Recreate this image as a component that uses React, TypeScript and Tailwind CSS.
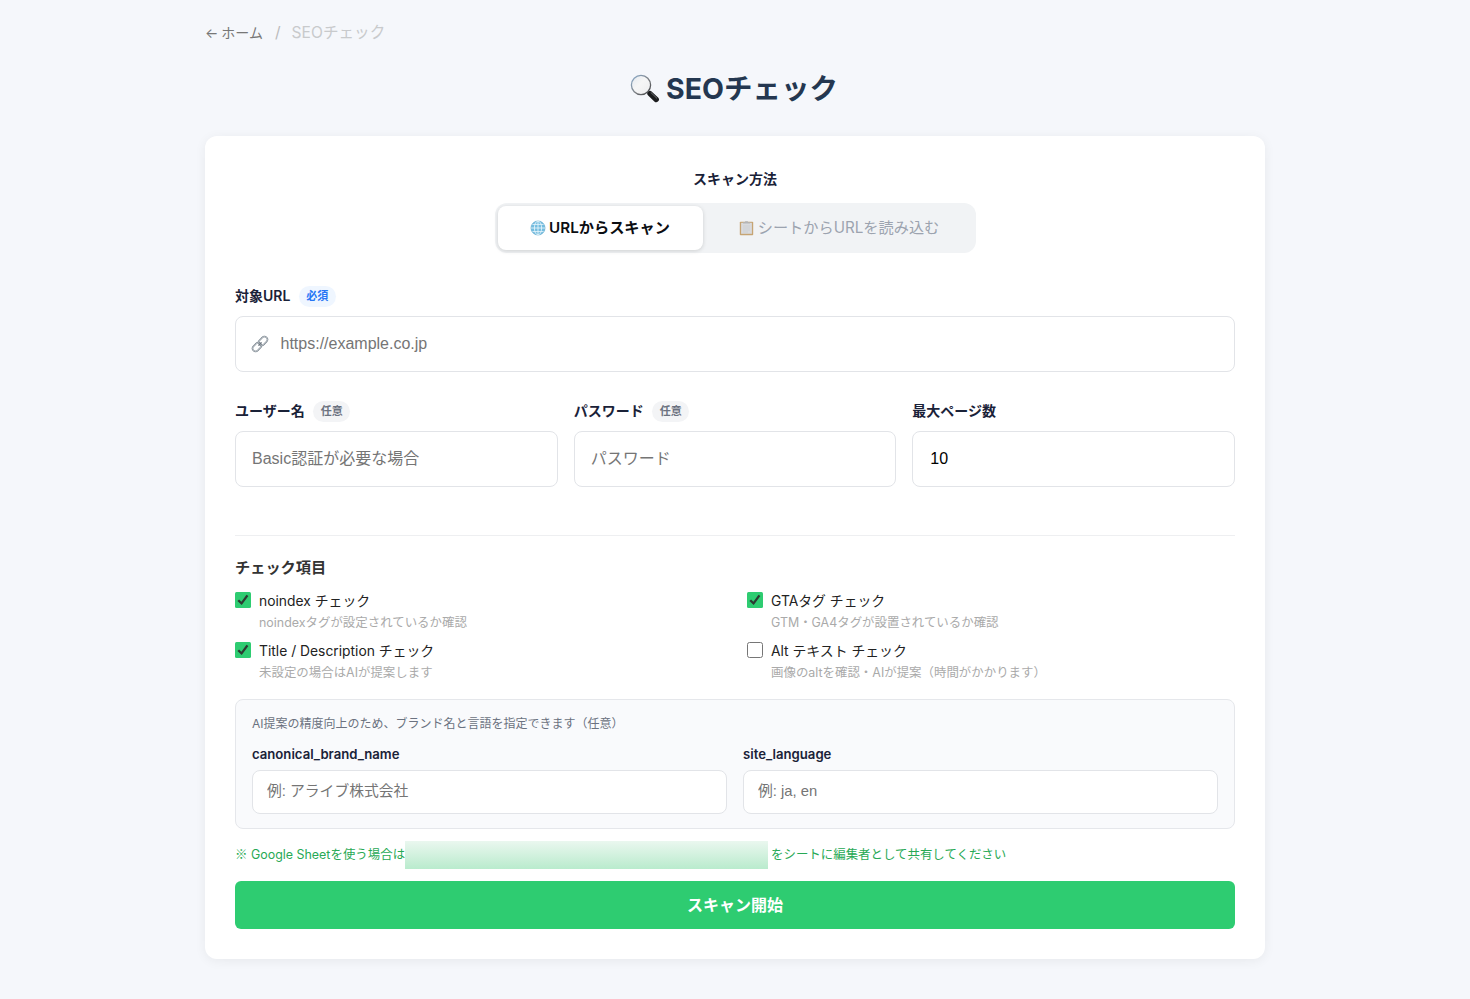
import React, { useState } from "react";

const ui = "font-['Inter','Noto_Sans_CJK_JP',sans-serif]";
const field = "font-['Liberation_Sans','Noto_Sans_CJK_JP',sans-serif]";

function MagnifierIcon() {
  return (
    <svg className="block shrink-0" width="30" height="30" viewBox="0 0 30 30" aria-hidden="true">
      <defs>
        <linearGradient id="lens" x1="0" y1="0" x2="1" y2="1">
          <stop offset="0" stopColor="#e3e9ef" />
          <stop offset=".45" stopColor="#f6f6f6" />
          <stop offset="1" stopColor="#ececee" />
        </linearGradient>
        <linearGradient id="rim" x1="0" y1="0" x2="1" y2="1">
          <stop offset="0" stopColor="#8fb0d0" />
          <stop offset=".55" stopColor="#7b7e82" />
          <stop offset="1" stopColor="#3c3d3f" />
        </linearGradient>
      </defs>
      <path d="M17.6 17.6l3 3" stroke="#6b6c6e" strokeWidth="1.8" />
      <path d="M20 19.6l6.2 5.9" stroke="#1b1c1e" strokeWidth="5.4" strokeLinecap="round" />
      <path d="M21 18.6l5.8 5.6" stroke="#77797d" strokeWidth=".9" strokeLinecap="round" />
      <circle cx="11" cy="11" r="9.6" fill="url(#lens)" stroke="url(#rim)" strokeWidth="1.3" />
    </svg>
  );
}

function GlobeIcon() {
  return (
    <svg className="block shrink-0" width="16" height="16" viewBox="0 0 16 16" fill="none" aria-hidden="true">
      <circle cx="8" cy="8" r="7" fill="#74bde0" stroke="#5ba7cd" strokeWidth=".7" />
      <g stroke="#e9f6fc" strokeWidth=".85">
        <ellipse cx="8" cy="8" rx="3.6" ry="6.9" />
        <path d="M8 1v14M1 8h14M2.4 4.4h11.2M2.4 11.6h11.2" />
      </g>
    </svg>
  );
}

function ClipboardIcon() {
  return (
    <svg className="block shrink-0" width="15" height="16" viewBox="0 0 15 16" aria-hidden="true">
      <rect x=".8" y="1.8" width="13.4" height="13.4" rx=".8" fill="#c6a473" />
      <rect x="2.1" y="2.8" width="10.8" height="11" fill="#d9dadd" />
      <path d="M4 6h7M4 8h7M4 10h7M4 12h5" stroke="#c9cbcf" strokeWidth=".7" />
      <path d="M4 3.6V2.2h2.1V1.2h2.8v1H11v1.4z" fill="#b4b5b8" />
    </svg>
  );
}

function LinkIcon() {
  return (
    <svg className="block shrink-0" width="18" height="18" viewBox="0 0 18 18" fill="none" aria-hidden="true">
      <g transform="rotate(-45 9 9)">
        <rect x="-.2" y="6" width="9.8" height="6" rx="3" stroke="#66717b" strokeWidth="1.5" />
        <rect x="-.2" y="6" width="9.8" height="6" rx="3" stroke="#dfe4e8" strokeWidth=".7" />
        <rect x="8.4" y="6" width="9.8" height="6" rx="3" stroke="#66717b" strokeWidth="1.5" />
        <rect x="8.4" y="6" width="9.8" height="6" rx="3" stroke="#dfe4e8" strokeWidth=".7" />
        <path d="M6.8 9h4.4" stroke="#66717b" strokeWidth="1.1" />
      </g>
    </svg>
  );
}

function Label({ children, tag, required }: { children: React.ReactNode; tag?: string; required?: boolean }) {
  return (
    <div className="flex h-5 items-center gap-[8.5px] text-[14px] font-semibold leading-5 text-[#1a2238]">
      <span>{children}</span>
      {tag && (
        <span
          className={
            required
              ? "flex h-[21px] items-center rounded-full bg-[#eff6ff] px-[7.5px] text-[11px] text-[#2675f5]"
              : "flex h-[21px] items-center rounded-full bg-[#f3f4f6] px-[7.5px] text-[11px] text-[#6b7280]"
          }
        >
          {tag}
        </span>
      )}
    </div>
  );
}

function CheckItem({ title, desc, initial = false }: { title: string; desc: string; initial?: boolean }) {
  const [on, setOn] = useState(initial);
  return (
    <label className="flex h-[50.4px] cursor-pointer gap-2">
      <input type="checkbox" className="sr-only" checked={on} onChange={() => setOn(!on)} />
      {on ? (
        <svg className="block shrink-0" width="16" height="16" viewBox="0 0 16 16" aria-hidden="true">
          <rect width="16" height="16" rx="1.5" fill="#2ecc71" />
          <path d="M2.4 8.9l1.7-1.5 2.3 2.3 5.1-7 1.9 1.3-6.7 9.1z" fill="#2c3a32" />
        </svg>
      ) : (
        <svg className="block shrink-0" width="16" height="16" viewBox="0 0 16 16" aria-hidden="true">
          <rect x=".5" y=".5" width="15" height="15" rx="2" fill="#fff" stroke="#767676" />
        </svg>
      )}
      <span className="flex flex-col">
        <span className="h-[18px] text-[13.85px] leading-[18px] text-[#222]">{title}</span>
        <span className="mt-[3px] h-5 text-[12.44px] leading-5 text-[#aaa]">{desc}</span>
      </span>
    </label>
  );
}

const bigInput =
  "h-14 w-full rounded-lg border-[1.5px] border-[#e2e4e8] bg-white px-4 text-[16px] text-black outline-none placeholder:text-[#757575]";
const smallInput =
  "h-11 w-full rounded-lg border-[1.5px] border-[#e2e4e8] bg-white px-[14px] pb-[2px] text-[14.8px] text-black outline-none placeholder:text-[#757575]";

export default function App() {
  return (
    <div lang="ja" className={`min-h-[999px] bg-[#f5f7fb] ${ui}`}>
      <div className="mx-auto flex w-[1060px] flex-col">
        <nav className="mt-[21px] flex h-6 items-center text-[14px] leading-6">
          <a className="flex items-center gap-[3px] text-[#777]">
            <span>←</span>
            <span>ホーム</span>
          </a>
          <span className="ml-3 text-[15.6px] text-[#bbb]">/</span>
          <span className="ml-[11px] text-[15.6px] text-[#c8cacc]">SEOチェック</span>
        </nav>

        <h1 className="mt-[24px] flex h-10 items-center justify-center gap-[6px] pr-[2px] text-[28.5px] font-bold leading-10 text-[#243750]">
          <MagnifierIcon />
          <span>SEOチェック</span>
        </h1>

        <main className="mt-[27px] flex h-[823px] flex-col rounded-xl bg-white px-[30px] shadow-[0_2px_12px_rgba(0,0,0,0.06)]">
          <div className="mt-[33px] text-center text-[14px] font-semibold leading-5 text-[#1a2238]">スキャン方法</div>

          <div className="mt-[14px] flex h-[50px] w-[481px] self-center rounded-xl bg-[#f1f3f5] p-[3px] text-[15.2px]">
            <button className="flex w-[205px] items-center justify-center gap-[3px] rounded-lg bg-white font-semibold text-[#0b0d12] shadow-[0_1px_4px_rgba(0,0,0,0.15)]">
              <GlobeIcon />
              <span>URLからスキャン</span>
            </button>
            <button className="flex flex-1 items-center justify-center gap-1 pl-[3px] text-[#9ca3af]">
              <ClipboardIcon />
              <span>シートからURLを読み込む</span>
            </button>
          </div>

          <div className="mt-[33px]">
            <Label tag="必須" required>対象URL</Label>
          </div>
          <div className="mt-[10px] flex h-14 items-center gap-3 rounded-lg border-[1.5px] border-[#e2e4e8] pl-[14.5px] pr-4">
            <LinkIcon />
            <input
              className={`flex-1 text-[16px] text-black outline-none placeholder:text-[#757575] ${field}`}
              placeholder="https://example.co.jp"
            />
          </div>

          <div className="mt-[29px] grid grid-cols-3 gap-4">
            <div className="flex flex-col gap-[10px]">
              <Label tag="任意">ユーザー名</Label>
              <input className={`${bigInput} ${field}`} placeholder="Basic認証が必要な場合" />
            </div>
            <div className="flex flex-col gap-[10px]">
              <Label tag="任意">パスワード</Label>
              <input type="password" className={`${bigInput} ${field}`} placeholder="パスワード" />
            </div>
            <div className="flex flex-col gap-[10px]">
              <Label>最大ページ数</Label>
              <input className={`${bigInput} pl-[17px] ${field}`} defaultValue="10" />
            </div>
          </div>

          <div className="mt-[48px] h-px bg-[#eeeff1]" />

          <h2 className="mt-[20px] text-[15.2px] font-semibold leading-6 text-[#333]">チェック項目</h2>

          <div className="mt-[12px] grid grid-cols-2 gap-x-6">
            <CheckItem title="noindex チェック" desc="noindexタグが設定されているか確認" initial />
            <CheckItem title="GTAタグ チェック" desc="GTM・GA4タグが設置されているか確認" initial />
            <CheckItem title="Title / Description チェック" desc="未設定の場合はAIが提案します" initial />
            <CheckItem title="Alt テキスト チェック" desc="画像のaltを確認・AIが提案（時間がかかります）" />
          </div>

          <section className="mt-[6.2px] flex h-[130px] flex-col rounded-lg border border-[#e5e7eb] bg-[#f9fafc] px-4">
            <p className="mt-[14px] text-[12px] leading-5 text-[#6b7280]">
              AI提案の精度向上のため、ブランド名と言語を指定できます（任意）
            </p>
            <div className="mt-[10px] grid grid-cols-2 gap-4">
              <label className="flex flex-col gap-[6px] text-[13.15px] font-semibold leading-5 text-[#1a2238]">
                canonical_brand_name
                <input className={`font-normal ${smallInput} ${field}`} placeholder="例: アライブ株式会社" />
              </label>
              <label className="flex flex-col gap-[6px] text-[13.15px] font-semibold leading-5 text-[#1a2238]">
                site_language
                <input className={`font-normal ${smallInput} ${field}`} placeholder="例: ja, en" />
              </label>
            </div>
          </section>

          <div className="mt-3 flex h-7 items-center text-[12.45px] text-[#27a955]">
            <span className="w-[170px] whitespace-nowrap">
              <span className="font-['Noto_Sans_CJK_JP',sans-serif]">※</span> Google Sheetを使う場合は
            </span>
            <span className="h-7 w-[363px] bg-linear-to-b from-[#eaf7ef] to-[#b9ebcd]" />
            <span className="ml-[3px]">をシートに編集者として共有してください</span>
          </div>

          <button className="mt-3 h-12 rounded-md bg-[#2ecc71] text-[16px] font-bold text-white">スキャン開始</button>
        </main>
      </div>
    </div>
  );
}
